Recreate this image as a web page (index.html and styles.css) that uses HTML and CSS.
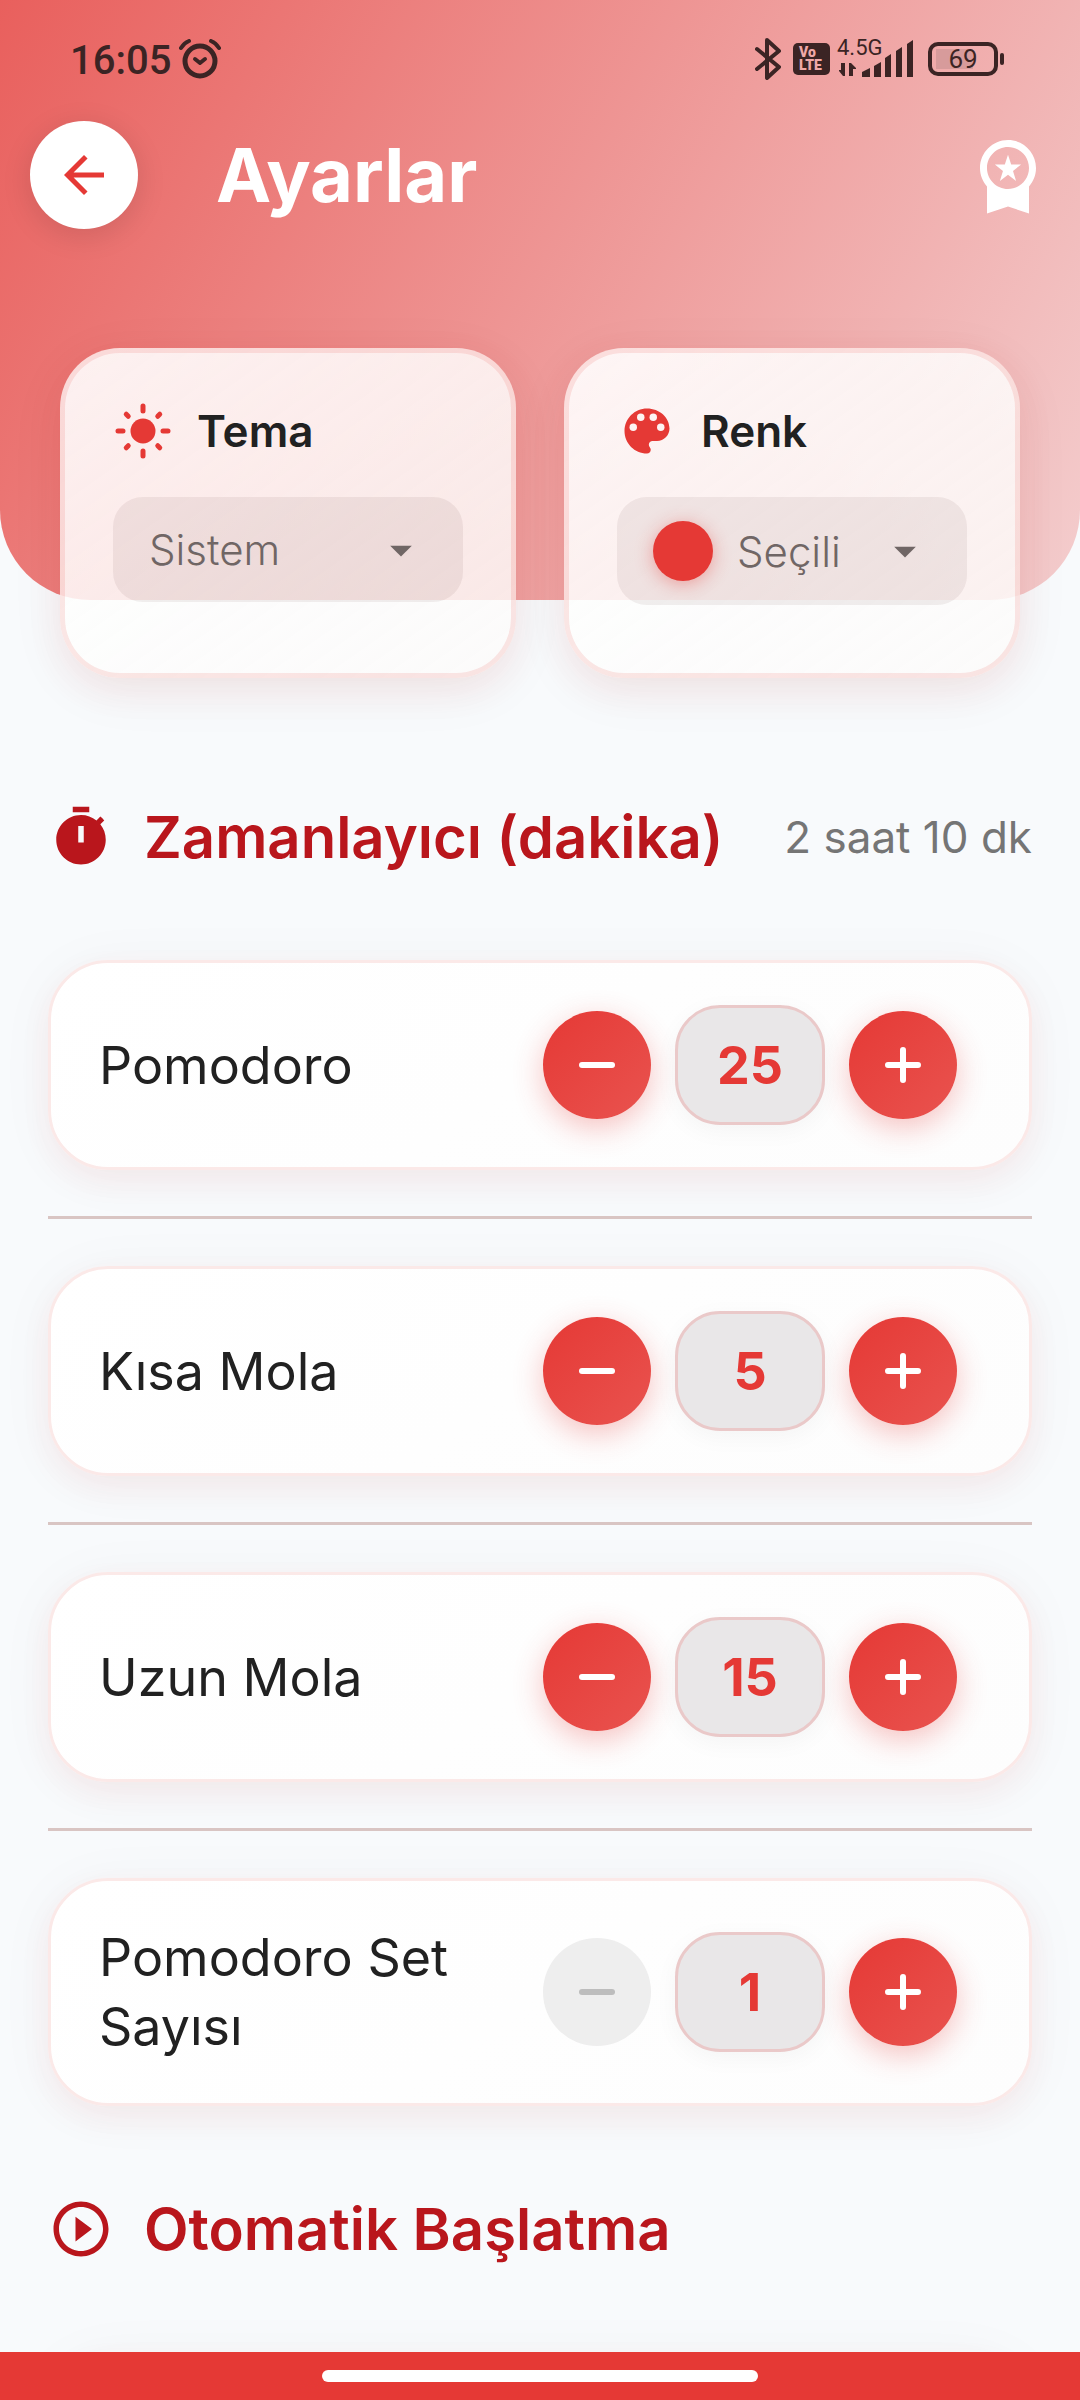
FILE: index.html
```html
<!DOCTYPE html>
<html lang="tr">
<head>
    <meta charset="UTF-8">
    <meta name="viewport" content="width=device-width, initial-scale=1.0">
    <title>Ayarlar</title>
    <link rel="stylesheet" href="styles.css">
</head>
<body>
    <!-- Shared icon shapes -->
    <svg class="sprite" aria-hidden="true">
        <symbol id="icon-minus" viewBox="0 0 24 24">
            <path d="M6 12h12" fill="none" stroke="currentColor" stroke-width="2.4" stroke-linecap="round"/>
        </symbol>
        <symbol id="icon-plus" viewBox="0 0 24 24">
            <path d="M6 12h12M12 6v12" fill="none" stroke="currentColor" stroke-width="2.4" stroke-linecap="round"/>
        </symbol>
        <symbol id="icon-arrow" viewBox="0 0 24 24">
            <path d="M7 10l5 5 5-5z" fill="currentColor"/>
        </symbol>
    </svg>

    <div class="screen">
        <header class="header">
            <div class="status-bar">
                <div class="status-left">
                    <time class="clock">16:05</time>
                    <svg class="alarm-icon" viewBox="0 0 42 40" fill="none" stroke="currentColor" stroke-linecap="round" stroke-linejoin="round">
                        <circle cx="21" cy="22" r="15" stroke-width="5"/>
                        <path d="M2 9q3-5 8-7M40 9q-3-5-8-7" stroke-width="4"/>
                        <path d="M16 20l5 4 5-4" stroke-width="4"/>
                    </svg>
                </div>
                <div class="status-right">
                    <svg class="bluetooth-icon" viewBox="0 0 26 42" fill="none" stroke="currentColor" stroke-width="4" stroke-linecap="round" stroke-linejoin="round">
                        <path d="M2 11l22 18-12 11V2l12 11L2 31"/>
                    </svg>
                    <div class="volte"><span>Vo</span><span>LTE</span></div>
                    <div class="signal">
                        <span class="network">4.5G</span>
                        <svg class="signal-icon" viewBox="0 0 76 36" fill="currentColor">
                            <path d="M7 22v13h-2l-4-5v-1h2v-7zM11 35V22h2l5 5v1h-3v7z"/>
                            <path d="M24 31l8-4v9h-8zM36 25l7-4v15h-7zM47 17l6-4v23h-6zM58 10l6-4v30h-6zM69 3l6-4v37h-6z"/>
                        </svg>
                    </div>
                    <div class="battery"><span class="battery-level">69</span></div>
                </div>
            </div>
            <div class="app-bar">
                <button class="back-button" type="button" aria-label="Geri">
                    <svg viewBox="0 0 24 24" fill="currentColor">
                        <path d="M20 11H7.83l5.59-5.59L12 4l-8 8 8 8 1.41-1.41L7.83 13H20z"/>
                    </svg>
                </button>
                <h1 class="title">Ayarlar</h1>
                <button class="premium-button" type="button" aria-label="Premium">
                    <svg viewBox="0 0 24 24" fill="currentColor">
                        <path d="M9.68 13.69L12 11.93l2.31 1.76-.88-2.85L15.75 9h-2.84L12 6.19 11.09 9H8.25l2.31 1.84-.88 2.85zM20 10c0-4.42-3.58-8-8-8s-8 3.58-8 8c0 2.03.76 3.87 2 5.28V23l6-2 6 2v-7.72c1.24-1.41 2-3.25 2-5.28zm-8-6c3.31 0 6 2.69 6 6s-2.69 6-6 6-6-2.69-6-6 2.69-6 6-6z"/>
                    </svg>
                </button>
            </div>
        </header>

        <main class="content">
            <section class="appearance">
                <div class="option-card">
                    <label class="option-title" for="theme">
                        <svg viewBox="0 0 24 24" fill="currentColor" stroke="currentColor" stroke-width="2" stroke-linecap="round">
                            <circle cx="12" cy="12" r="5" stroke="none"/>
                            <path d="M12 2v2M12 20v2M2 12h2M20 12h2M5.3 5.3l.8.8M17.900 17.900l.8.8M5.300 18.700l.8-.8M17.900 6.100l.8-.8"/>
                        </svg>
                        Tema
                    </label>
                    <div class="select-box">
                        <select id="theme">
                            <option>Sistem</option>
                        </select>
                        <svg class="arrow"><use href="#icon-arrow"/></svg>
                    </div>
                </div>
                <div class="option-card">
                    <label class="option-title" for="color">
                        <svg viewBox="0 0 24 24" fill="currentColor">
                            <path d="M12 3c-4.97 0-9 4.03-9 9s4.03 9 9 9c.83 0 1.5-.67 1.5-1.5 0-.39-.15-.74-.39-1.01-.23-.26-.38-.61-.38-.99 0-.83.67-1.5 1.5-1.5H16c2.76 0 5-2.24 5-5 0-4.42-4.03-8-9-8z"/>
                            <g class="paint-holes">
                                <circle cx="6.5" cy="10.5" r="1.5"/>
                                <circle cx="9.5" cy="6.5" r="1.5"/>
                                <circle cx="14.5" cy="6.5" r="1.5"/>
                                <circle cx="17.5" cy="10.5" r="1.5"/>
                            </g>
                        </svg>
                        Renk
                    </label>
                    <div class="select-box">
                        <span class="color-dot"></span>
                        <select id="color">
                            <option>Seçili</option>
                        </select>
                        <svg class="arrow"><use href="#icon-arrow"/></svg>
                    </div>
                </div>
            </section>

            <section class="timer">
                <div class="section-header">
                    <svg viewBox="0 0 24 24" fill="currentColor">
                        <path d="M9 1h6v2H9zM19.03 7.39l1.42-1.42c-.43-.51-.9-.99-1.41-1.41l-1.42 1.42C16.07 4.74 14.12 4 12 4c-4.97 0-9 4.03-9 9s4.02 9 9 9 9-4.03 9-9c0-2.12-.74-4.07-1.97-5.61zM13 14h-2V8h2z"/>
                    </svg>
                    <h2>Zamanlayıcı (dakika)</h2>
                    <span class="total">2 saat 10 dk</span>
                </div>

                <div class="setting-card">
                    <span class="setting-label">Pomodoro</span>
                    <div class="stepper">
                        <button class="step-button" type="button" aria-label="Azalt"><svg><use href="#icon-minus"/></svg></button>
                        <output class="value">25</output>
                        <button class="step-button" type="button" aria-label="Artır"><svg><use href="#icon-plus"/></svg></button>
                    </div>
                </div>
                <hr>
                <div class="setting-card">
                    <span class="setting-label">Kısa Mola</span>
                    <div class="stepper">
                        <button class="step-button" type="button" aria-label="Azalt"><svg><use href="#icon-minus"/></svg></button>
                        <output class="value">5</output>
                        <button class="step-button" type="button" aria-label="Artır"><svg><use href="#icon-plus"/></svg></button>
                    </div>
                </div>
                <hr>
                <div class="setting-card">
                    <span class="setting-label">Uzun Mola</span>
                    <div class="stepper">
                        <button class="step-button" type="button" aria-label="Azalt"><svg><use href="#icon-minus"/></svg></button>
                        <output class="value">15</output>
                        <button class="step-button" type="button" aria-label="Artır"><svg><use href="#icon-plus"/></svg></button>
                    </div>
                </div>
                <hr>
                <div class="setting-card">
                    <span class="setting-label">Pomodoro Set Sayısı</span>
                    <div class="stepper">
                        <button class="step-button" type="button" aria-label="Azalt" disabled><svg><use href="#icon-minus"/></svg></button>
                        <output class="value">1</output>
                        <button class="step-button" type="button" aria-label="Artır"><svg><use href="#icon-plus"/></svg></button>
                    </div>
                </div>
            </section>

            <section class="auto-start">
                <div class="section-header">
                    <svg viewBox="0 0 24 24" fill="currentColor">
                        <path d="M12 2C6.48 2 2 6.48 2 12s4.48 10 10 10 10-4.48 10-10S17.52 2 12 2zm0 18c-4.41 0-8-3.59-8-8s3.59-8 8-8 8 3.59 8 8-3.59 8-8 8zM10 16.5l6-4.5-6-4.5z"/>
                    </svg>
                    <h2>Otomatik Başlatma</h2>
                </div>
                <div class="setting-card"></div>
            </section>
        </main>
    </div>

    <footer class="nav-bar"><span class="home-indicator"></span></footer>
</body>
</html>
```
FILE: styles.css
```css
* {
    box-sizing: border-box;
}

body {
    margin: 0;
    height: 100vh;
    display: flex;
    flex-direction: column;
    overflow: hidden;
    font-family: 'Inter', sans-serif;
    color: #212121;
    background: #f8fafc;
}

svg {
    display: block;
    flex-shrink: 0;
}

button {
    border: none;
    padding: 0;
    display: flex;
    align-items: center;
    justify-content: center;
    cursor: pointer;
}

.sprite {
    position: absolute;
    width: 0;
    height: 0;
}

.screen {
    flex: 1;
    min-height: 0;
    overflow-y: auto;
    scrollbar-width: none;
}

/* Header */
.header {
    height: 600px;
    border-radius: 0 0 90px 90px;
    background: linear-gradient(119deg, rgba(229, 57, 53, 0.8), rgba(229, 57, 53, 0.23));
}

.status-bar {
    height: 121px;
    padding: 0 82px 4px 70px;
    display: flex;
    align-items: center;
    justify-content: space-between;
    font-family: 'Roboto', sans-serif;
    color: #3b2424;
}

.status-left,
.status-right {
    display: flex;
    align-items: center;
}

.clock {
    font-size: 40px;
    font-weight: 500;
    margin-top: 4px;
}

.alarm-icon {
    width: 42px;
    height: 40px;
    margin-left: 8px;
}

.bluetooth-icon {
    width: 26px;
    height: 42px;
}

.volte {
    width: 37px;
    height: 32px;
    margin-left: 12px;
    border-radius: 5px;
    display: flex;
    flex-direction: column;
    justify-content: center;
    padding-left: 6px;
    font-size: 14px;
    font-weight: 900;
    line-height: 13px;
    color: #f0a9a8;
    background: #3b2424;
}

.signal {
    position: relative;
    margin-left: 8px;
}

.signal-icon {
    width: 76px;
    height: 36px;
    overflow: visible;
}

.network {
    position: absolute;
    top: -6px;
    left: -1px;
    font-size: 22px;
    line-height: 26px;
}

.battery {
    position: relative;
    width: 70px;
    height: 34px;
    margin-left: 14px;
    border: 4px solid currentColor;
    border-radius: 10px;
    display: flex;
    align-items: center;
    justify-content: center;
    font-size: 26px;
    background: linear-gradient(#d79b9b, #d79b9b) 4px 3px / 37px 20px no-repeat;
}

.battery::after {
    content: '';
    position: absolute;
    right: -10px;
    width: 4px;
    height: 12px;
    border-radius: 2px;
    background: currentColor;
}

.app-bar {
    display: flex;
    align-items: center;
    padding: 0 30px;
}

.back-button {
    width: 108px;
    height: 108px;
    border-radius: 50%;
    color: #e53935;
    background: #fff;
    box-shadow: 0 6px 30px rgba(0, 0, 0, 0.12);
}

.back-button svg {
    width: 60px;
    height: 60px;
}

.title {
    flex: 1;
    margin: 0 0 0 78px;
    font-size: 74px;
    line-height: 108px;
    font-weight: 700;
    color: #fff;
}

.premium-button {
    color: #fff;
    background: none;
}

.premium-button svg {
    width: 84px;
    height: 84px;
}

/* Content overlaps the lower part of the header */
.content {
    margin-top: -252px;
    padding: 0 48px;
}

.appearance {
    display: grid;
    grid-template-columns: 1fr 1fr;
    gap: 48px;
    padding: 0 12px;
}

.option-card {
    min-width: 0;
    padding: 48px 48px 68px;
    border: 5px solid rgba(229, 57, 53, 0.12);
    border-radius: 60px;
    background: linear-gradient(145deg, rgba(255, 255, 255, 0.9), rgba(252, 251, 249, 0.78)) border-box;
    box-shadow: 0 12px 36px rgba(229, 57, 53, 0.08), 0 12px 60px rgba(60, 30, 0, 0.05);
}

.option-title {
    display: flex;
    align-items: center;
    gap: 24px;
    font-size: 44px;
    line-height: 60px;
    font-weight: 600;
}

.option-title svg {
    width: 60px;
    height: 60px;
    color: #e53935;
}

.paint-holes {
    fill: #fdf3f2;
}

.select-box {
    display: flex;
    align-items: center;
    gap: 24px;
    margin-top: 36px;
    padding: 24px 36px;
    border-radius: 30px;
    color: #706665;
    background: rgba(90, 50, 50, 0.08);
}

.select-box select {
    flex: 1;
    min-width: 0;
    height: 57px;
    padding: 0;
    border: none;
    appearance: none;
    font-family: inherit;
    font-size: 42px;
    font-weight: 300;
    color: inherit;
    background: none;
}

.arrow {
    width: 52px;
    height: 52px;
}

.color-dot {
    width: 60px;
    height: 60px;
    flex-shrink: 0;
    border-radius: 50%;
    background: #e53935;
    box-shadow: 0 3px 18px rgba(229, 57, 53, 0.4);
}

/* Sections */
.timer {
    margin-top: 126px;
}

.auto-start {
    margin-top: 90px;
}

.section-header {
    display: flex;
    align-items: center;
    gap: 30px;
    margin-bottom: 90px;
    line-height: 66px;
    color: #b9161c;
}

.section-header svg {
    width: 66px;
    height: 66px;
}

.section-header h2 {
    margin: 0;
    font-size: 58px;
    font-weight: 600;
    white-space: nowrap;
}

.total {
    margin-left: auto;
    font-size: 44px;
    font-weight: 400;
    white-space: nowrap;
    color: #757575;
}

.setting-card {
    min-height: 210px;
    display: flex;
    align-items: center;
    padding: 42px 72px 42px 48px;
    border: 3px solid #fbe9e8;
    border-radius: 60px;
    background: linear-gradient(145deg, #fff, #fdfdfd);
    box-shadow: 0 12px 30px rgba(229, 57, 53, 0.06), 0 6px 60px rgba(80, 50, 0, 0.04);
}

.setting-label {
    flex: 1;
    font-size: 52px;
    line-height: 69px;
}

.stepper {
    display: flex;
    align-items: center;
    gap: 24px;
}

.step-button {
    width: 108px;
    height: 108px;
    border-radius: 50%;
    color: #fff;
    background: linear-gradient(135deg, #e53935, #e9534f);
    box-shadow: 0 9px 30px rgba(229, 57, 53, 0.3);
}

.step-button svg {
    width: 60px;
    height: 60px;
}

.step-button:disabled {
    color: #bdbdbd;
    background: #eee;
    box-shadow: none;
}

.value {
    width: 150px;
    height: 120px;
    display: flex;
    align-items: center;
    justify-content: center;
    border: 3px solid #eac9c9;
    border-radius: 45px;
    font-size: 52px;
    font-weight: 700;
    color: #e53935;
    background: #e9e7e8;
    box-shadow: 0 6px 24px rgba(0, 0, 0, 0.04);
}

hr {
    height: 3px;
    margin: 46px 0 47px;
    border: none;
    background: #d9c5c3;
}

/* System navigation bar */
.nav-bar {
    position: relative;
    height: 48px;
    flex-shrink: 0;
    display: flex;
    align-items: center;
    justify-content: center;
    background: #e53935;
}

.home-indicator {
    width: 436px;
    height: 12px;
    border-radius: 6px;
    background: #fff;
}
```
